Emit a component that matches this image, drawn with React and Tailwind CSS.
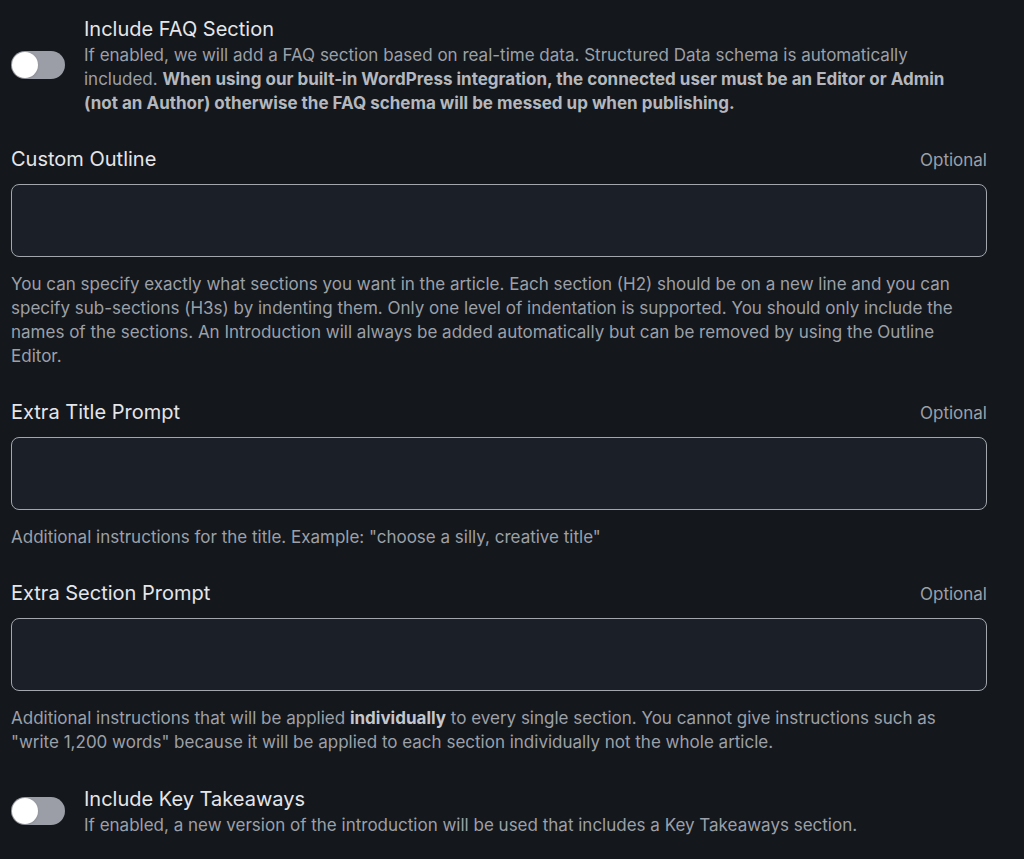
import React from 'react';

const Toggle = () => (
  <div className="w-[54px] h-[28px] rounded-full bg-[#9b9ea6] flex items-center px-[1px] shrink-0">
    <div className="w-[26px] h-[26px] rounded-full bg-white shadow" />
  </div>
);

const Field = ({ label, children, top }) => (
  <div className={top}>
    <div className="flex justify-between items-baseline">
      <label className="text-[20px] leading-[28px] text-[#e4e6ea]">{label}</label>
      <span className="text-[17px] leading-[24px] text-[#9ca0a8]">Optional</span>
    </div>
    <textarea
      className="mt-[11px] block w-full h-[73px] rounded-lg border border-[#a3a7ad] bg-[#1b1f27] resize-none outline-none"
      rows={2}
    />
    <p className="mt-[15px] text-[17px] leading-[24px] text-[#9ca0a8]">{children}</p>
  </div>
);

export default function App() {
  return (
    <div className="min-h-[859px] bg-[#14171c] font-['Inter',sans-serif] pl-[11px] pr-[37px] pt-[15px] pb-8">
      <div className="flex items-center gap-[19px]">
        <Toggle />
        <div className="max-w-[885px]">
          <h3 className="text-[20px] leading-[28px] text-[#e4e6ea]">Include FAQ Section</h3>
          <p className="text-[17px] leading-[24px] text-[#9ca0a8]">
            If enabled, we will add a FAQ section based on real-time data. Structured Data schema is automatically
            included.{' '}
            <strong className="font-bold text-[#b4b7bd]">
              When using our built-in WordPress integration, the connected user must be an Editor or Admin (not an
              Author) otherwise the FAQ schema will be messed up when publishing.
            </strong>
          </p>
        </div>
      </div>

      <Field label="Custom Outline" top="mt-[30px]">
        You can specify exactly what sections you want in the article. Each section (H2) should be on a new line and you can
        specify sub-sections (H3s) by indenting them. Only one level of indentation is supported. You should only include the
        names of the sections. An Introduction will always be added automatically but can be removed by using the Outline
        Editor.
      </Field>

      <Field label="Extra Title Prompt" top="mt-[30px]">
        Additional instructions for the title. Example: "choose a silly, creative title"
      </Field>

      <Field label="Extra Section Prompt" top="mt-[30px]">
        Additional instructions that will be applied <strong className="font-bold text-[#c4c7cc]">individually</strong> to
        every single section. You cannot give instructions such as "write 1,200 words" because it will be applied to each
        section individually not the whole article.
      </Field>

      <div className="mt-[31px] flex items-center gap-[19px]">
        <Toggle />
        <div>
          <h3 className="text-[20px] leading-[28px] text-[#e4e6ea]">Include Key Takeaways</h3>
          <p className="text-[17px] leading-[24px] text-[#9ca0a8]">
            If enabled, a new version of the introduction will be used that includes a Key Takeaways section.
          </p>
        </div>
      </div>
    </div>
  );
}
